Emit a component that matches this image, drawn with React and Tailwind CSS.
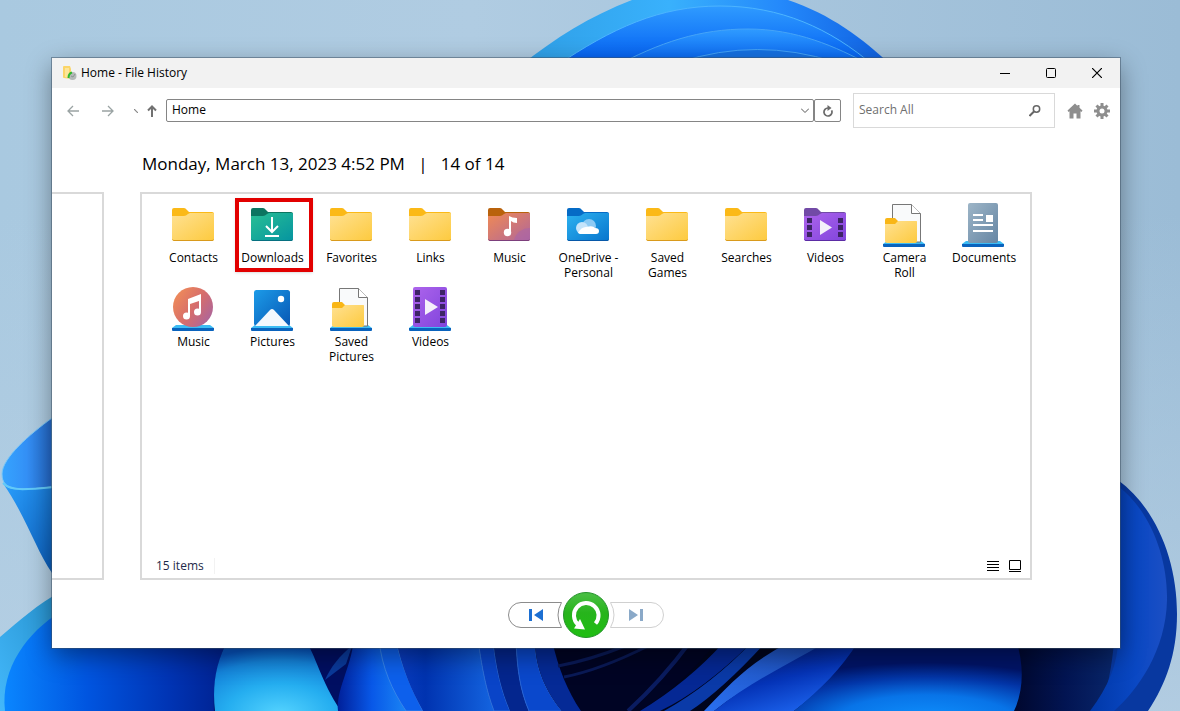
import React, { useState } from "react";

const Wallpaper = () => (
  <svg
    className="absolute inset-0 w-full h-full"
    viewBox="0 0 1180 711"
    preserveAspectRatio="none"
    aria-hidden="true"
  >
    <defs>
      <linearGradient id="sky" x1="0" y1="0" x2="1" y2="0">
        <stop offset="0" stopColor="#a9c9e0" />
        <stop offset="0.4" stopColor="#b0cce2" />
        <stop offset="1" stopColor="#9bbcd6" />
      </linearGradient>
      <linearGradient id="skyLow" x1="0" y1="0" x2="0" y2="1">
        <stop offset="0.3" stopColor="#b7d0e4" stopOpacity="0" />
        <stop offset="1" stopColor="#b7d0e4" stopOpacity="0.8" />
      </linearGradient>
      <linearGradient id="outer" x1="0" y1="0" x2="1" y2="0">
        <stop offset="0" stopColor="#2f9fe6" />
        <stop offset="0.4" stopColor="#39b1fc" />
        <stop offset="0.7" stopColor="#2489fb" />
        <stop offset="1" stopColor="#0f5fe0" />
      </linearGradient>
      <linearGradient id="ring" x1="0" y1="0" x2="0" y2="1">
        <stop offset="0" stopColor="#2f9bff" />
        <stop offset="1" stopColor="#005cf2" />
      </linearGradient>
      <linearGradient id="leftPetal" x1="0" y1="0" x2="1" y2="0">
        <stop offset="0" stopColor="#35a4ff" />
        <stop offset="0.5" stopColor="#3490f6" />
        <stop offset="1" stopColor="#2468c8" />
      </linearGradient>
      <linearGradient id="leftLow" x1="0" y1="0" x2="1" y2="1">
        <stop offset="0" stopColor="#2aa0ff" />
        <stop offset="1" stopColor="#0b5cb8" />
      </linearGradient>
      <linearGradient id="cyan" x1="0" y1="1" x2="1" y2="0">
        <stop offset="0" stopColor="#43b8fb" />
        <stop offset="1" stopColor="#2590cc" />
      </linearGradient>
      <linearGradient id="deep" x1="0" y1="0" x2="1" y2="0">
        <stop offset="0" stopColor="#0a86ff" />
        <stop offset="0.35" stopColor="#0055e0" />
        <stop offset="0.7" stopColor="#0034b4" />
        <stop offset="1" stopColor="#001c86" />
      </linearGradient>
      <radialGradient id="glow" cx="0.52" cy="1.05" r="0.95">
        <stop offset="0" stopColor="#55d4ff" />
        <stop offset="0.45" stopColor="#25aef0" />
        <stop offset="0.8" stopColor="#1484dc" />
        <stop offset="1" stopColor="#0754c0" />
      </radialGradient>
      <linearGradient id="fold" x1="0" y1="0" x2="1" y2="0">
        <stop offset="0" stopColor="#00209a" />
        <stop offset="0.5" stopColor="#0858e8" />
        <stop offset="1" stopColor="#1a84f4" />
      </linearGradient>
      <linearGradient id="foldDark" x1="0" y1="0" x2="1" y2="0">
        <stop offset="0" stopColor="#0a3cc0" />
        <stop offset="0.3" stopColor="#0033b0" />
        <stop offset="1" stopColor="#1464e0" />
      </linearGradient>
      <linearGradient id="streak" x1="0" y1="1" x2="1" y2="0">
        <stop offset="0" stopColor="#2a70f0" />
        <stop offset="1" stopColor="#1a48b0" />
      </linearGradient>
      <linearGradient id="slope" x1="0" y1="0" x2="0.6" y2="1">
        <stop offset="0" stopColor="#000c58" />
        <stop offset="0.6" stopColor="#0534b8" />
        <stop offset="1" stopColor="#1b62ec" />
      </linearGradient>
      <radialGradient id="glowRight" cx="0.56" cy="1.15" r="0.85">
        <stop offset="0" stopColor="#0f92ff" />
        <stop offset="0.45" stopColor="#0874e8" />
        <stop offset="0.75" stopColor="#0336a8" />
        <stop offset="1" stopColor="#001468" />
      </radialGradient>
      <linearGradient id="night" x1="0" y1="0" x2="1" y2="0">
        <stop offset="0" stopColor="#000424" />
        <stop offset="0.5" stopColor="#021452" />
        <stop offset="1" stopColor="#0b2c72" />
      </linearGradient>
      <linearGradient id="rightPetal" x1="0" y1="0" x2="1" y2="0">
        <stop offset="0" stopColor="#0038a8" />
        <stop offset="0.6" stopColor="#0a48c4" />
        <stop offset="1" stopColor="#1c4fc4" />
      </linearGradient>
    </defs>

    <rect width="1180" height="711" fill="url(#sky)" />
    <rect width="1180" height="711" fill="url(#skyLow)" />

    {/* top flower */}
    <path d="M520 66C555 38 590 16 632 0H788C830 14 862 38 892 66Z" fill="url(#outer)" />
    <path d="M556 66C612 28 660 6 720 6S830 28 874 66Z" fill="url(#ring)" stroke="#4db5ff" />
    <path d="M612 68C660 42 700 29 748 29S835 46 872 66Z" fill="url(#ring)" stroke="#45a4f8" />
    <path d="M680 62Q757 37 835 62Z" fill="#1672e4" stroke="#45a4f8" />

    {/* left petals */}
    <path d="M52 418C30 434 2 458 2 474C2 492 20 490 52 487Z" fill="url(#leftPetal)" stroke="#7cc8f6" />
    <path d="M2 482C8 492 20 490 52 487V573C36 550 26 516 2 482Z" fill="url(#leftLow)" />
    <path d="M3 483C10 491 24 490 54 487" fill="none" stroke="#62caf8" strokeWidth="2" />
    <path d="M0 637C20 620 38 604 60 592V711H0Z" fill="url(#cyan)" />
    <path d="M5 711C0 668 28 632 60 612H240V711Z" fill="url(#deep)" />

    {/* bottom folds */}
    <path d="M228 640H360V711H214C213 685 216 662 228 640Z" fill="#000f62" />
    <path d="M228 640H305C316 655 320 680 341 711H215C212 685 216 662 228 640Z" fill="url(#glow)" />
    <path d="M325 680C330 668 340 655 352 646L346 664Z" fill="#0a3a9c" />
    <path d="M354 640H381C385 668 395 690 406 711H338C336 690 350 670 354 640Z" fill="url(#fold)" />
    <path d="M379 640H396C402 668 412 690 423 711H406C392 690 382 668 379 640Z" fill="#0d60ec" stroke="#3684ea" />
    <path d="M396 640H478C482 668 486 690 494 711H423C411 690 402 668 396 640Z" fill="url(#foldDark)" />
    <path d="M478 640H493C496 668 501 690 510 711H494C486 690 482 668 478 640Z" fill="#0944c8" stroke="#2a6cd8" />
    <path d="M493 640H516C517 668 520 690 529 711H510C501 690 496 668 493 640Z" fill="#04268e" />
    <path d="M516 640H535C535 668 546 692 562 711H529C520 690 517 668 516 640Z" fill="#0a48cc" stroke="#2462d4" />
    <path d="M535 640H720V711H562C546 692 535 668 535 640Z" fill="#000424" />
    <path d="M535 640H552C558 668 568 692 581 711H562C546 692 535 668 535 640Z" fill="#052a96" />
    <path d="M558 666Q590 660 625 646M564 677Q600 670 648 646" fill="none" stroke="#0a1a58" strokeWidth="3" />
    <path d="M628 711Q662 680 690 642" fill="none" stroke="#0a1c60" strokeWidth="4" />
    <path d="M718 640H900V711H640Q684 684 718 640Z" fill="#00051e" />
    <path d="M640 711Q688 682 724 642H752Q704 690 660 711Z" fill="#052894" />
    <path d="M664 711Q712 684 752 642H766Q722 690 690 711Z" fill="#0a3aa8" />
    <path d="M704 711C730 684 750 662 790 642H832C796 664 756 678 714 711Z" fill="url(#streak)" />
    <path d="M714 711C752 680 790 664 826 642H858C842 672 816 694 794 711Z" fill="url(#slope)" />
    <path d="M794 711C820 690 842 668 858 642H1030V711Z" fill="url(#glowRight)" />
    <path d="M1000 640H1130V711H1014C1024 690 1024 664 1016 640Z" fill="url(#night)" />

    {/* right petal */}
    <path d="M1118 480C1156 508 1177 560 1177 614C1177 654 1166 684 1148 711H1098Q1122 670 1118 480Z" fill="#0838a0" />
    <path d="M1118 486C1150 510 1168 558 1167 600C1166 650 1138 690 1114 711H1090Q1118 674 1118 640Z" fill="url(#rightPetal)" />
  </svg>
);

const Folder = ({ tab = "#fbb917", from = "#ffe192", to = "#fdca3e", edge = "#d99a1c", children }) => {
  const id = `folder${from.slice(1)}${to.slice(1)}`;
  return (
    <svg className="w-[49px] h-12" viewBox="0 0 49 48" aria-hidden="true">
      <defs>
        <linearGradient id={id} x1="0" y1="0" x2="1" y2="1">
          <stop offset="0" stopColor={from} />
          <stop offset="1" stopColor={to} />
        </linearGradient>
      </defs>
      <path d="M3 8Q3 6 5 6H15Q16.500 6 18 8L20 10H43Q45 10 45 12V20H3Z" fill={tab} />
      <path d="M3 14H15Q17 14 19 12L21 11H44Q45 11 45 12V37Q45 39 43 39H5Q3 39 3 37Z" fill={`url(#${id})`} />
      <path d="M3.500 37.500Q4 38.500 5 38.500H43Q44.500 38.500 44.500 37.500" fill="none" stroke={edge} />
      {children}
    </svg>
  );
};

const Base = () => (
  <>
    <path d="M7 39H41L45 42H3Z" fill="#3cbcf4" />
    <path d="M3 42H45V44Q45 45 44 45H4Q3 45 3 44Z" fill="#0a63bd" />
  </>
);

const DownloadsIcon = () => (
  <Folder tab="#0c7560" from="#29bf94" to="#0594a0" edge="#077080">
    <path d="M24 15V30M18 24L24 30L30 24M17 34H31" fill="none" stroke="#fff" strokeWidth="2" />
  </Folder>
);

const MusicFolderIcon = () => (
  <Folder tab="#b9620c" from="#f08a54" to="#b0669a" edge="#7c3f7c">
    <path d="M45 26A16 16 0 0 0 29 38H43Q45 38 45 36Z" fill="#a564ae" opacity="0.5" />
    <circle cx="22.500" cy="30.500" r="3.700" fill="#fff" />
    <path d="M24 30V14Q27 16 32 16V21Q28 21 26 19V30Z" fill="#fff" />
  </Folder>
);

const OneDriveIcon = () => (
  <Folder tab="#056bc6" from="#2cb2f0" to="#0875cd" edge="#0758a8">
    <circle cx="25" cy="24" r="7" fill="#8ccaf4" />
    <circle cx="18" cy="26" r="6" fill="#c5e4fa" />
    <path d="M14 31Q17 25 22 25Q29 23 31 26Q35 26 35 29Q35 32 32 32H16Z" fill="#fff" />
  </Folder>
);

const VideosFolderIcon = () => (
  <Folder tab="#724aa6" from="#ad64ec" to="#8044dc" edge="#5b2ca4">
    <path d="M6 16H11V21H6ZM6 23H11V28H6ZM6 30H11V35H6ZM37 16H42V21H37ZM37 23H42V28H37ZM37 30H42V35H37Z" fill="#3d2466" />
    <path d="M19 18L31 25.500L19 33Z" fill="#f4f0fa" />
  </Folder>
);

const PageFolderIcon = () => (
  <svg className="w-[49px] h-12" viewBox="0 0 49 48" aria-hidden="true">
    <Base />
    <path d="M12.500 2.500H31.500L40.500 11.500V40H12.500Z" fill="#f9fafb" stroke="#777" />
    <path d="M31.500 2.500V11.500H40.500" fill="#fff" stroke="#777" />
    <path d="M5 18Q5 16 7 16H15L18 19H35Q37 19 37 21V26H5Z" fill="#f9b616" />
    <path d="M5 22H15L18 19H36Q37 19 37 20V39Q37 41 35 41H7Q5 41 5 39Z" fill="url(#folderffe192fdca3e)" />
  </svg>
);

const DocumentsIcon = () => (
  <svg className="w-[49px] h-12" viewBox="0 0 49 48" aria-hidden="true">
    <defs>
      <linearGradient id="doc" x1="0" y1="0" x2="1" y2="1">
        <stop offset="0" stopColor="#9db5c7" />
        <stop offset="1" stopColor="#6686a4" />
      </linearGradient>
    </defs>
    <Base />
    <rect x="9" y="1" width="30" height="40" rx="2" fill="url(#doc)" />
    <path d="M14 13H24M14 18H24M14 23H34M14 29H34" stroke="#fff" strokeWidth="2" />
    <rect x="27" y="13" width="7" height="7" fill="#fff" />
  </svg>
);

const MusicIcon = () => (
  <svg className="w-[49px] h-12" viewBox="0 0 49 48" aria-hidden="true">
    <defs>
      <linearGradient id="disc" x1="0" y1="0.200" x2="1" y2="0.900">
        <stop offset="0" stopColor="#f08c58" />
        <stop offset="0.500" stopColor="#d66d6c" />
        <stop offset="1" stopColor="#a464a4" />
      </linearGradient>
    </defs>
    <Base />
    <circle cx="24" cy="21" r="20" fill="url(#disc)" />
    <circle cx="17.500" cy="30" r="3.500" fill="#fff" />
    <circle cx="28.500" cy="26" r="3.500" fill="#fff" />
    <path d="M19 30V13L32 8V26H30V15L21 18V30Z" fill="#fff" />
  </svg>
);

const PicturesIcon = () => (
  <svg className="w-[49px] h-12" viewBox="0 0 49 48" aria-hidden="true">
    <defs>
      <linearGradient id="pic" x1="0" y1="0" x2="1" y2="1">
        <stop offset="0" stopColor="#1c9be8" />
        <stop offset="1" stopColor="#0757b4" />
      </linearGradient>
    </defs>
    <Base />
    <rect x="6" y="4" width="36" height="36" rx="2.500" fill="url(#pic)" />
    <circle cx="33" cy="13" r="3.200" fill="#fff" />
    <path d="M7 40L22 24Q24 22 26 24L41 40Z" fill="#f3f8fd" />
  </svg>
);

const VideosIcon = () => (
  <svg className="w-[49px] h-12" viewBox="0 0 49 48" aria-hidden="true">
    <Base />
    <rect x="7" y="1" width="34" height="40" rx="2" fill="url(#folderad64ec8044dc)" />
    <path
      d="M9 4H14V9H9ZM9 11H14V16H9ZM9 18H14V23H9ZM9 25H14V30H9ZM9 32H14V37H9ZM34 4H39V9H34ZM34 11H39V16H34ZM34 18H39V23H34ZM34 25H39V30H34ZM34 32H39V37H34Z"
      fill="#3d2466"
    />
    <path d="M19 13L32 21L19 29Z" fill="#f4f0fa" />
  </svg>
);

const items = [
  { name: "Contacts", icon: Folder },
  { name: "Downloads", icon: DownloadsIcon, marked: true },
  { name: "Favorites", icon: Folder },
  { name: "Links", icon: Folder },
  { name: "Music", icon: MusicFolderIcon },
  { name: "OneDrive - Personal", icon: OneDriveIcon },
  { name: "Saved Games", icon: Folder },
  { name: "Searches", icon: Folder },
  { name: "Videos", icon: VideosFolderIcon },
  { name: "Camera Roll", icon: PageFolderIcon },
  { name: "Documents", icon: DocumentsIcon },
  { name: "Music", icon: MusicIcon },
  { name: "Pictures", icon: PicturesIcon },
  { name: "Saved Pictures", icon: PageFolderIcon },
  { name: "Videos", icon: VideosIcon },
];

const TitleBar = () => (
  <header className="flex items-center h-[30px] pl-[11px] bg-[#f2f2f2]">
    <svg className="w-[14px] h-4 shrink-0" viewBox="0 0 14 16" aria-hidden="true">
      <path d="M0 2Q0 1 1 1H7L8 4V14L1 13Q0 13 0 12Z" fill="#fbd568" />
      <path d="M2 3H6V13L2 12Z" fill="#fde59a" />
      <circle cx="9.500" cy="11" r="4" fill="#b4bab8" />
      <path d="M9 7.500Q5.500 8.500 5.500 13" fill="none" stroke="#2eb82e" strokeWidth="2" />
      <path d="M8 11L10 12L12 9" fill="none" stroke="#8d9492" />
    </svg>
    <h1 className="flex-1 pl-1 text-xs leading-4">Home - File History</h1>
    <button aria-label="Minimize" className="flex items-center justify-center w-[46px] h-[30px]">
      <svg className="w-[10px] h-[10px]" viewBox="0 0 10 10">
        <path d="M0 5.500H10" stroke="#000" />
      </svg>
    </button>
    <button aria-label="Maximize" className="flex items-center justify-center w-[46px] h-[30px]">
      <svg className="w-[10px] h-[10px]" viewBox="0 0 10 10">
        <rect x="0.500" y="0.500" width="9" height="9" rx="1" fill="none" stroke="#000" />
      </svg>
    </button>
    <button aria-label="Close" className="flex items-center justify-center w-[46px] h-[30px]">
      <svg className="w-[10px] h-[10px]" viewBox="0 0 10 10">
        <path d="M0 0L10 10M10 0L0 10" stroke="#000" strokeWidth="1.200" />
      </svg>
    </button>
  </header>
);

const Toolbar = () => {
  const [path, setPath] = useState("Home");
  const [query, setQuery] = useState("");

  return (
    <nav className="flex items-center h-[45px] pl-[3px] pr-[10px]">
      <button aria-label="Back" className="flex justify-center w-[35px]">
        <svg className="w-3 h-3" viewBox="0 0 12 12" fill="none" stroke="#9aa3a3" strokeWidth="1.300">
          <path d="M12 6H1M6 1L1 6L6 11" />
        </svg>
      </button>
      <button aria-label="Forward" className="flex justify-center w-[35px]">
        <svg className="w-3 h-3" viewBox="0 0 12 12" fill="none" stroke="#9aa3a3" strokeWidth="1.300">
          <path d="M0 6H11M6 1L11 6L6 11" />
        </svg>
      </button>
      <button aria-label="Recent locations" className="flex justify-center w-[21px]">
        <svg className="w-1 h-1" viewBox="0 0 4 4">
          <path d="M0 0L4 4" stroke="#888" strokeWidth="1.200" />
        </svg>
      </button>
      <button aria-label="Up" className="flex justify-center w-3">
        <svg className="w-[10px] h-3" viewBox="0 0 10 12" fill="none" stroke="#717171" strokeWidth="2">
          <path d="M5 12V1M1 5.500L5 1.500L9 5.500" />
        </svg>
      </button>
      <div className="flex flex-1 h-[23px] ml-2">
        <div className="flex flex-1 items-center border border-[#858585] rounded-xs">
          <input
            aria-label="Address"
            value={path}
            onChange={(e) => setPath(e.target.value)}
            className="flex-1 min-w-0 h-5 pl-[5px] pb-0.5 text-xs outline-none"
          />
          <button aria-label="Show previous locations" className="flex justify-center w-4">
            <svg className="w-2 h-[5px]" viewBox="0 0 8 5" fill="none" stroke="#555">
              <path d="M0 0.500L4 4.500L8 0.500" />
            </svg>
          </button>
        </div>
        <button
          aria-label="Refresh"
          className="flex items-center justify-center w-[27px] border border-[#858585] rounded-xs"
        >
          <svg className="w-3 h-3" viewBox="0 0 12 12" fill="none">
            <path d="M6 3A4 4 0 1 0 9.600 5.300" stroke="#6a6a6a" strokeWidth="1.700" />
            <path d="M5.500 0L9.500 3L5.500 6Z" fill="#6a6a6a" />
          </svg>
        </button>
      </div>
      <form
        role="search"
        onSubmit={(e) => e.preventDefault()}
        className="flex items-center w-[202px] h-[35px] ml-3 border border-[#d9d9d9]"
      >
        <input
          aria-label="Search All"
          placeholder="Search All"
          value={query}
          onChange={(e) => setQuery(e.target.value)}
          className="flex-1 min-w-0 h-5 pl-[5px] pb-0.5 text-xs outline-none placeholder:text-[#6f6f6f]"
        />
        <button aria-label="Search" className="flex justify-center w-[38px]">
          <svg className="w-3 h-3" viewBox="0 0 12 12" fill="none" stroke="#666">
            <circle cx="7.500" cy="4" r="3.200" strokeWidth="1.500" />
            <path d="M5 6.500L0.500 11" strokeWidth="2" />
          </svg>
        </button>
      </form>
      <button aria-label="File History home" className="ml-3">
        <svg className="w-4 h-4" viewBox="0 0 16 16" fill="#8e8e8e">
          <path d="M8 0.500L0.500 7.500L1.500 9L2.500 8.200V15.500H6.500V10.500H9.500V15.500H13.500V8.200L14.500 9L15.500 7.500L12.500 4.700V2H10.500V2.900Z" />
        </svg>
      </button>
      <button aria-label="Options" className="ml-[11px]">
        <svg className="w-4 h-4" viewBox="0 0 16 16">
          <g stroke="#8e8e8e" strokeWidth="3">
            <path d="M8 0V16M0 8H16M2.500 2.500L13.500 13.500M13.500 2.500L2.500 13.500" />
          </g>
          <circle cx="8" cy="8" r="5.500" fill="#8e8e8e" />
          <circle cx="8" cy="8" r="2.500" fill="#fff" />
        </svg>
      </button>
    </nav>
  );
};

const FileItem = ({ item }) => {
  const Icon = item.icon;

  return (
    <li className="relative">
      <button className="flex flex-col items-center w-full">
        <Icon />
        <span className="w-[63px] text-xs leading-[15px] text-center">{item.name}</span>
      </button>
      {item.marked && (
        <span className="absolute -top-1 left-0.5 w-[78px] h-[74px] border-4 border-[#e20000] shadow-sm pointer-events-none" />
      )}
    </li>
  );
};

const Player = () => (
  <footer className="flex items-center justify-center pt-3 pb-[10px]">
    <button aria-label="Previous version">
      <svg className="w-[55px] h-7" viewBox="0 0 55 28">
        <path d="M53.500 1.500H13A12.500 12.500 0 0 0 13 26.500H53.500Q46.500 14 53.500 1.500Z" fill="#fff" stroke="#8c8c8c" />
        <path d="M21 8H24V20H21ZM35 8V20L26 14Z" fill="#1c6fd2" />
      </svg>
    </button>
    <button aria-label="Restore">
      <svg className="w-[46px] h-[46px]" viewBox="0 0 46 46">
        <defs>
          <linearGradient id="restore" x1="0" y1="0" x2="0" y2="1">
            <stop offset="0" stopColor="#4bbf45" />
            <stop offset="0.450" stopColor="#27b41c" />
            <stop offset="1" stopColor="#1fbe12" />
          </linearGradient>
        </defs>
        <circle cx="23" cy="23" r="22.500" fill="url(#restore)" stroke="#24922a" />
        <path d="M32.500 31.500A12.300 12.300 0 1 0 15 32.500" fill="none" stroke="#fff" strokeWidth="4" />
        <path d="M17 27L22 37.500L11 36.500Z" fill="#fff" />
      </svg>
    </button>
    <button aria-label="Next version">
      <svg className="w-[55px] h-7" viewBox="0 0 55 28">
        <path d="M1.500 1.500H42A12.500 12.500 0 0 1 42 26.500H1.500Q8.500 14 1.500 1.500Z" fill="#fff" stroke="#d0d0d0" />
        <path d="M31 8H34V20H31ZM20 8V20L29 14Z" fill="#8aa9c8" />
      </svg>
    </button>
  </footer>
);

const App = () => {
  return (
    <div className="relative isolate flex min-h-screen pl-[52px] pr-[60px] pt-[58px] pb-[63px] font-['Open_Sans','Noto_Sans',sans-serif] text-black">
      <div className="absolute inset-0 -z-10">
        <Wallpaper />
      </div>

      <div className="flex flex-col flex-1 min-w-0 bg-white shadow-[0_0_0_1px_rgba(60,80,100,0.5),0_8px_24px_rgba(0,0,0,0.4)]">
        <TitleBar />
        <Toolbar />

        <h2 className="pl-[90px] pt-[17px] pb-[14px] text-[17px] leading-7 whitespace-pre">
          Monday, March 13, 2023 4:52 PM{"   |   "}14 of 14
        </h2>

        <main className="flex flex-1 pr-[88px]">
          {/* edge of the previous version */}
          <div className="w-[52px] mr-9 shrink-0 border-2 border-l-0 border-[#d9d9d9]" />

          <section className="flex flex-col flex-1 min-w-0 border-2 border-[#d9d9d9]">
            <ul className="grid grid-cols-[repeat(auto-fill,79px)] gap-y-1.5 pl-3 pt-2">
              {items.map((item, i) => (
                <FileItem key={i} item={item} />
              ))}
            </ul>

            <div className="flex items-center mt-auto pl-[14px] pr-[9px] pb-1 text-xs leading-4">
              <span className="pr-[10px] border-r border-[#f2f2f2] text-[#1e2a4a]">15 items</span>
              <button aria-label="Details view" className="ml-auto">
                <svg className="w-3 h-3" viewBox="0 0 12 12">
                  <path d="M0 1.500H12M0 4.500H12M0 7.500H12M0 10.500H12" stroke="#000" />
                </svg>
              </button>
              <button aria-label="Large icons" className="ml-[10px]">
                <svg className="w-3 h-3" viewBox="0 0 12 12" fill="none" stroke="#000">
                  <path d="M0.500 0.500H11.500V9.500H0.500ZM0 11.500H12" />
                </svg>
              </button>
            </div>
          </section>
        </main>

        <Player />
      </div>
    </div>
  );
};

export default App;
